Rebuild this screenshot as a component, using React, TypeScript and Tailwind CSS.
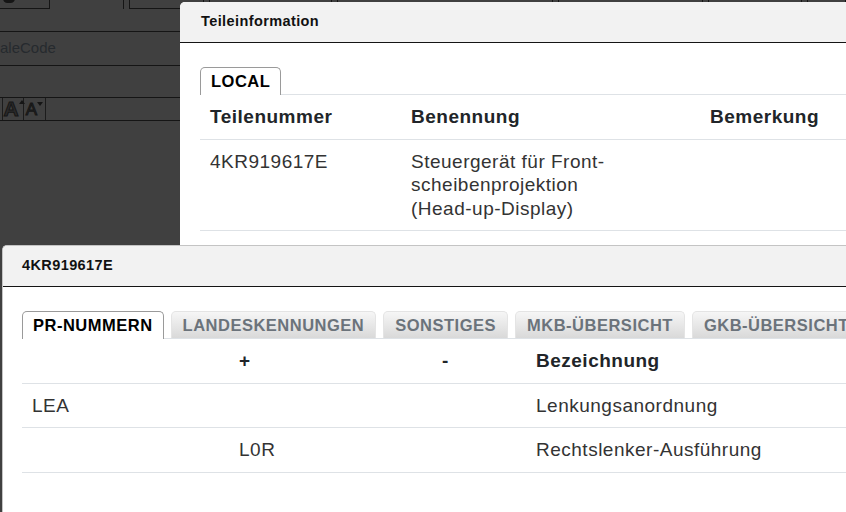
const font = { fontFamily: '"Liberation Sans", Arial, sans-serif' };

const TopBoxes = () => (
  <div className="flex h-[9px]">
    <div className="w-[51px] border-r border-b border-[#151515] relative">
      <div className="absolute left-[3px] -top-[6px] w-[12px] h-[9px] rounded-full bg-[#151515]" />
    </div>
    <div className="w-[75px] border-r border-[#151515]" />
    <div className="ml-[5px] w-[77px] border-x border-b border-[#151515]" />
    <div className="ml-[5px] w-[125px] border-x border-b border-[#151515]" />
    <div className="ml-[5px] w-[220px] border-x border-b border-[#151515]" />
    <div className="ml-[5px] w-[148px] border-x border-b border-[#151515]" />
    <div className="ml-[5px] w-[95px] border-x border-b border-[#151515]" />
    <div className="ml-[5px] w-[40px] border-x border-b border-[#151515]" />
  </div>
);

const Caret = ({ up }: { up?: boolean }) => (
  <svg width="6" height="4" viewBox="0 0 6 4" className="shrink-0">
    <path d={up ? "M0 4 L3 0 L6 4 Z" : "M0 0 L3 4 L6 0 Z"} fill="#151515" />
  </svg>
);

const Background = () => (
  <div className="flex flex-col">
    <TopBoxes />
    <div className="h-[23px] border-b border-[#151515]" />
    <div className="h-[34px] border-b border-[#151515] flex items-center text-[15px] text-[#262a2e]">
      aleCode
    </div>
    <div className="h-[32px] border-b border-[#151515]" />
    <div className="h-[23px] border-b border-[#151515] flex items-stretch">
      <div className="ml-[2px] w-[22px] border-x border-[#1c1c1c] flex items-start justify-center pl-[2px]">
        <span className="mt-[1px] text-[21px] leading-[20px] font-bold text-[#2a2a2a] [-webkit-text-stroke:1px_#161616]">A</span>
        <div className="mt-[2px]">
          <Caret up />
        </div>
      </div>
      <div className="w-[22px] border-r border-[#1c1c1c] flex items-start justify-center">
        <span className="mt-[3px] text-[17px] leading-[18px] text-[#2a2a2a] [-webkit-text-stroke:1px_#161616]">A</span>
        <div className="mt-[4px]">
          <Caret />
        </div>
      </div>
    </div>
  </div>
);

const Tab = ({ label, active }: { label: string; active?: boolean }) => (
  <div
    className={
      active
        ? "h-[28px] -mb-px px-[10px] flex items-center rounded-t-[5px] border border-b-0 border-[#9a9a9a] bg-white text-[16.5px] font-bold tracking-[0.5px] text-black"
        : "h-[27px] px-[11px] flex items-center rounded-t-[5px] border border-b-0 border-[#e4e4e4] bg-gradient-to-b from-[#f6f6f6] to-[#d9d9d9] text-[16.5px] font-bold tracking-[0.5px] text-[#6b737b]"
    }
  >
    {label}
  </div>
);

const Cell = ({ w, bold, children }: { w?: string; bold?: boolean; children?: React.ReactNode }) => (
  <div className={`${w ?? "flex-1"} px-[10px] py-[10px] leading-[23.5px] ${bold ? "font-bold text-[#212529]" : "text-[#333]"}`}>
    {children}
  </div>
);

const PartDialog = () => (
  <div className="absolute left-[180px] top-[2px] w-[720px] h-[300px] bg-white rounded-tl-[5px] overflow-hidden">
    <div className="h-[41px] bg-[#f2f2f2] border-b border-[#151515] pl-[21px] flex items-center text-[14.5px] font-bold tracking-[0.4px] text-[#111]">
      Teileinformation
    </div>
    <div className="px-[20px] pt-[24px]">
      <div className="flex items-end border-b border-[#dee2e6]">
        <Tab label="LOCAL" active />
      </div>
      <div className="text-[19px] tracking-[0.5px]">
        <div className="flex border-b border-[#dee2e6]">
          <Cell w="w-[201px]" bold>Teilenummer</Cell>
          <Cell w="w-[299px]" bold>Benennung</Cell>
          <Cell bold>Bemerkung</Cell>
        </div>
        <div className="flex border-b border-[#dee2e6]">
          <Cell w="w-[201px]">4KR919617E</Cell>
          <Cell w="w-[299px]">
            Steuergerät für Front-
            <br />
            scheibenprojektion
            <br />
            (Head-up-Display)
          </Cell>
          <Cell />
        </div>
      </div>
    </div>
  </div>
);

const prRows = [
  { a: "LEA", b: "", c: "", d: "Lenkungsanordnung" },
  { a: "", b: "L0R", c: "", d: "Rechtslenker-Ausführung" },
];

const PrDialog = () => (
  <div className="absolute left-[2px] top-[245px] w-[900px] h-[300px] bg-white rounded-tl-[5px] border-t border-l border-[#c4c4c4] overflow-hidden">
    <div className="h-[41px] bg-[#f2f2f2] border-b border-[#151515] pl-[19px] flex items-center text-[14.5px] font-bold tracking-[0.4px] text-[#111]">
      4KR919617E
    </div>
    <div className="pl-[19px] pt-[24px]">
      <div className="flex items-end gap-[7px] border-b border-[#dee2e6]">
        <Tab label="PR-NUMMERN" active />
        <Tab label="LANDESKENNUNGEN" />
        <Tab label="SONSTIGES" />
        <Tab label="MKB-ÜBERSICHT" />
        <Tab label="GKB-ÜBERSICHT" />
      </div>
      <div className="text-[19px] tracking-[0.5px]">
        <div className="flex border-b border-[#dee2e6]">
          <Cell w="w-[207px]" bold></Cell>
          <Cell w="w-[203px]" bold>+</Cell>
          <Cell w="w-[94px]" bold>-</Cell>
          <Cell bold>Bezeichnung</Cell>
        </div>
        {prRows.map((r, i) => (
          <div key={i} className="flex border-b border-[#dee2e6]">
            <Cell w="w-[207px]">{r.a}</Cell>
            <Cell w="w-[203px]">{r.b}</Cell>
            <Cell w="w-[94px]">{r.c}</Cell>
            <Cell>{r.d}</Cell>
          </div>
        ))}
      </div>
    </div>
  </div>
);

export default function App() {
  return (
    <div className="relative w-[846px] h-[512px] overflow-hidden bg-[#404040]" style={font}>
      <Background />
      <PartDialog />
      <PrDialog />
    </div>
  );
}
